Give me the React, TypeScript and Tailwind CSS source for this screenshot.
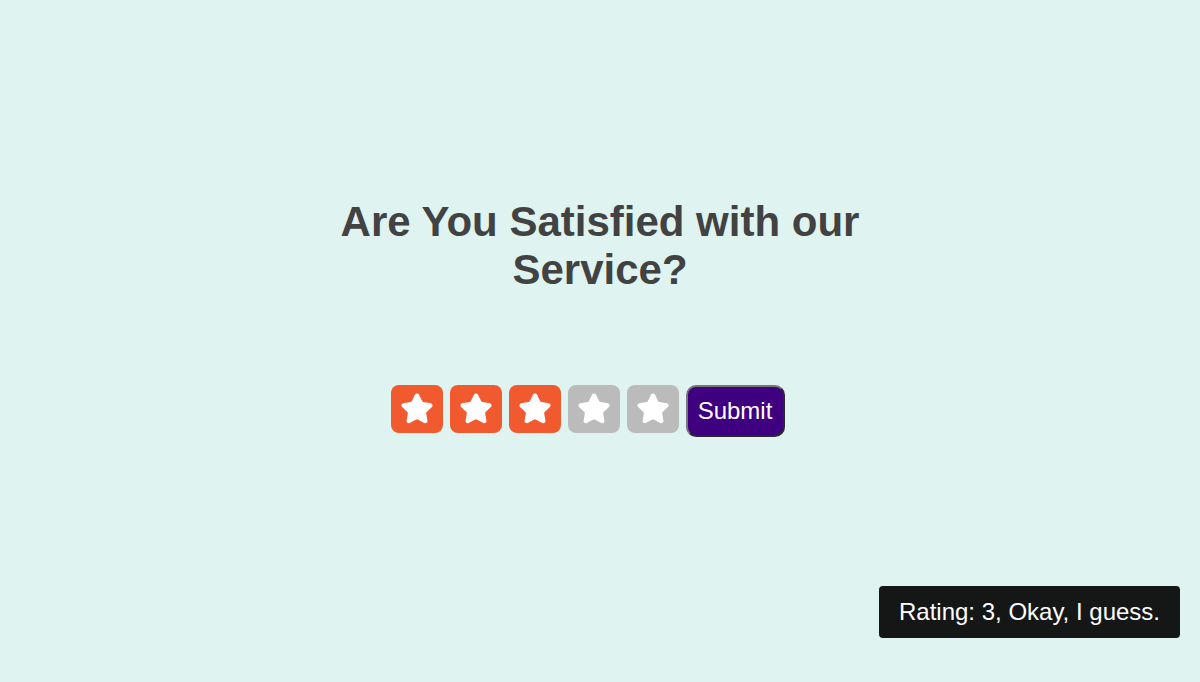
import { useState } from 'react';

const labels = ['Terrible.', 'Not great.', 'Okay, I guess.', 'Pretty good!', 'Excellent!'];

function StarIcon() {
  return (
    <svg width="34" height="34" viewBox="0 0 24 24" fill="white" stroke="white" strokeWidth="2" strokeLinejoin="round" strokeLinecap="round">
      <path d="M11.525 2.295a.53.53 0 0 1 .95 0l2.31 4.679a2.123 2.123 0 0 0 1.595 1.16l5.166.756a.53.53 0 0 1 .294.904l-3.736 3.638a2.123 2.123 0 0 0-.611 1.878l.882 5.14a.53.53 0 0 1-.771.56l-4.618-2.428a2.122 2.122 0 0 0-1.973 0L6.396 21.01a.53.53 0 0 1-.77-.56l.881-5.139a2.122 2.122 0 0 0-.611-1.879L2.16 9.795a.53.53 0 0 1 .294-.906l5.165-.755a2.122 2.122 0 0 0 1.597-1.16z" />
    </svg>
  );
}

export default function App() {
  const [rating, setRating] = useState(3);

  return (
    <div className="min-h-screen w-full bg-[#dff4f0] font-['Liberation_Sans',Arial,sans-serif] flex flex-col items-center pt-[198px]">
      <h1 className="max-w-[620px] text-center text-[42px] leading-[48px] font-bold text-[#424242]">
        Are You Satisfied with our Service?
      </h1>

      <div className="mt-[91px] flex items-start gap-[7px] pr-[25px]">
        {[1, 2, 3, 4, 5].map((n) => (
          <button
            key={n}
            onClick={() => setRating(n)}
            className={`w-[52px] h-[48px] rounded-[8px] flex items-center justify-center ${n <= rating ? 'bg-[#f15a2e]' : 'bg-[#bbbbbb]'}`}
          >
            <StarIcon />
          </button>
        ))}
        <button className="w-[99px] h-[52px] rounded-[10px] bg-[#3f007f] text-white text-[24px] border-2 border-t-[#777777] border-l-[#777777] border-r-[#2a2a2a] border-b-[#2a2a2a]">
          Submit
        </button>
      </div>

      <div className="fixed right-[20px] bottom-[44px] h-[52px] px-[20px] flex items-center rounded-[4px] bg-[#151716] text-white text-[24px]">
        Rating: {rating}, {labels[rating - 1]}
      </div>
    </div>
  );
}
